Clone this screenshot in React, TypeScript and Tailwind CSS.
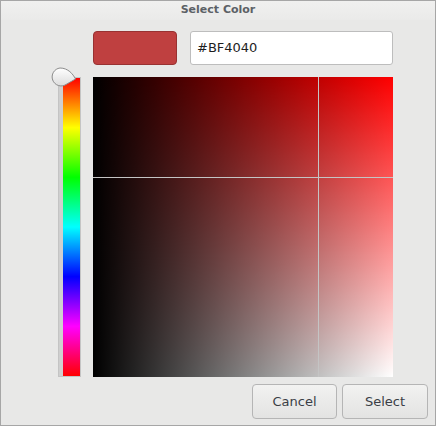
export default function App() {
  return (
    <div
      className="w-[436px] h-[426px] border border-[#a6a6a6] bg-[#e8e8e7] flex flex-col"
      style={{ fontFamily: '"DejaVu Sans", "Liberation Sans", sans-serif' }}
    >
      {/* title */}
      <div className="h-[19px] flex items-center justify-center text-[11px] font-bold text-[#5c6166] bg-linear-to-b from-[#f0f0ef] to-[#eaeae9]">
        Select Color
      </div>

      {/* swatch + hex */}
      <div className="mt-[11px] pl-[92px] flex gap-[13px]">
        <div className="w-[84px] h-[34px] rounded-[4px] bg-[#bf4040] border border-[#983232]" />
        <div className="w-[203px] h-[34px] bg-white border border-[#bdbdbd] rounded-[3px] pl-[6px] flex items-center text-[13px] text-[#1e1e1e]">
          #BF4040
        </div>
      </div>

      {/* hue + sv square */}
      <div className="mt-[12px] flex">
        <div className="w-[92px] relative">
          <div className="ml-[57px] w-[23px] h-[300px] flex bg-[#cfcfcf] border border-[#c4c4c4]">
            <div className="w-[4px]" />
            <div className="flex-1 [background-image:linear-gradient(to_bottom,#f00,#ff0,#0f0,#0ff,#00f,#f0f,#f00)]" />
          </div>
          <svg className="absolute left-[48px] top-[-11px]" width="30" height="24" viewBox="0 0 30 24">
            <defs>
              <linearGradient id="hg" x1="0" y1="0" x2="0" y2="1">
                <stop offset="0" stopColor="#ffffff" />
                <stop offset="1" stopColor="#dcdcdc" />
              </linearGradient>
            </defs>
            <path
              d="M 11 2 A 9 9 0 1 0 17 18.5 L 26.5 13 C 24 8 19 2 11 2 Z"
              fill="url(#hg)"
              stroke="#8c8c8c"
              strokeWidth="1"
            />
          </svg>
        </div>
        <div className="w-[300px] h-[300px] relative bg-[#ff0000]">
          <div className="absolute inset-0 bg-linear-to-b from-transparent to-white" />
          <div className="absolute inset-0 bg-linear-to-r from-black to-transparent" />
          <div className="absolute left-[225px] top-0 w-px h-full bg-[#c4c4c4]" />
          <div className="absolute top-[100px] left-0 h-px w-full bg-[#c4c4c4]" />
        </div>
      </div>

      {/* buttons */}
      <div className="mt-[7px] pr-[7px] flex justify-end gap-[5px]">
        <button className="w-[85px] h-[35px] rounded-[4px] border border-[#b5b5b5] bg-linear-to-b from-[#f2f2f1] to-[#e3e3e2] text-[13px] text-[#3a3e46]">
          Cancel
        </button>
        <button className="w-[86px] h-[35px] rounded-[4px] border border-[#b5b5b5] bg-linear-to-b from-[#f2f2f1] to-[#e3e3e2] text-[13px] text-[#3a3e46]">
          Select
        </button>
      </div>
    </div>
  );
}
